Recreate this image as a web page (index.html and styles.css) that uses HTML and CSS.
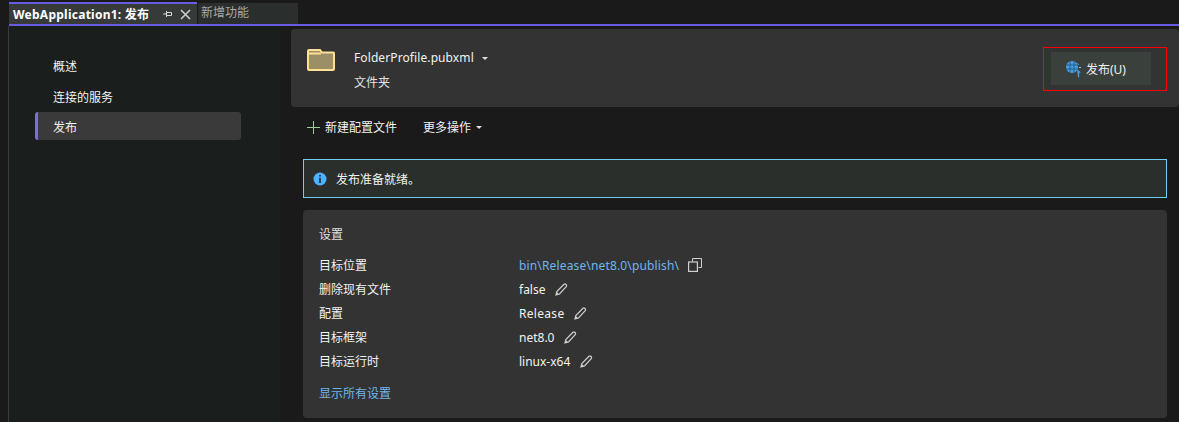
FILE: index.html
```html
<!DOCTYPE html>
<html lang="zh-CN">
<head>
  <meta charset="UTF-8" />
  <title>WebApplication1: 发布</title>
  <link rel="stylesheet" href="styles.css">
</head>
<body>

  <div class="tabs">
    <div class="tab active">
      <span class="tabName">WebApplication1: 发布</span>
      <svg class="pin" width="12" height="12" viewBox="0 0 12 12"><path d="M1 6h3M4.500 3v6M4.500 4.500h5v3h-5" fill="none" stroke="#d8d8d8"/></svg>
      <svg class="close" width="11" height="11" viewBox="0 0 11 11"><path d="M1 1l9 9M10 1l-9 9" fill="none" stroke="#d0d0d0" stroke-width="1.500"/></svg>
    </div>
    <div class="tab">新增功能</div>
  </div>

  <div class="page">
    <div class="side">
      <div class="item">概述</div>
      <div class="item">连接的服务</div>
      <div class="item selected">发布</div>
    </div>

    <div class="main">
      <div class="profile">
        <svg class="folder" width="28" height="22" viewBox="0 0 28 22">
          <path d="M1 20V2q0-1 1-1h11l2 2.500h11.500q.5 0 .5.500v16q0 1-1 1H2q-1 0-1-1z" fill="#9c8f68" stroke="#ffdf94" stroke-width="2"/>
          <path d="M1 4.500h13" stroke="#ffdf94" stroke-width="2"/>
        </svg>
        <div class="profileText">
          <div class="profileName">FolderProfile.pubxml <span class="caret"></span></div>
          <div class="profileType">文件夹</div>
        </div>
        <div class="highlight">
          <button class="btnPublish">
            <svg width="16" height="17" viewBox="0 0 16 17">
              <circle cx="6" cy="6" r="6" fill="#4a9ede"/>
              <path d="M0 4h12M0 8h12M4 .5v11M8 .5v11" stroke="#1f5f93" stroke-width="1"/>
              <path d="M11 8l4 3.500-1.800.3 0 4.700-1.200-.5z" fill="#4a9ede"/>
              <path d="M11.500 2.500l1 1M13 6.500h2" stroke="#8cc4ee"/>
            </svg>
            发布(U)
          </button>
        </div>
      </div>

      <div class="toolbar">
        <span class="tool">
          <svg width="13" height="13" viewBox="0 0 13 13"><path d="M6.500 0v13M0 6.500h13" stroke="#9fd09a"/></svg>
          新建配置文件
        </span>
        <span class="tool">更多操作 <span class="caret"></span></span>
      </div>

      <div class="content">
        <div class="info">
          <svg width="14" height="14" viewBox="0 0 14 14">
            <circle cx="7" cy="7" r="6.500" fill="#4db2ff"/>
            <rect x="6.200" y="2.800" width="1.600" height="1.700" fill="#16293a"/>
            <rect x="6.200" y="5.800" width="1.600" height="5.200" fill="#16293a"/>
          </svg>
          发布准备就绪。
        </div>

        <div class="settings">
          <div class="settingsTitle">设置</div>
          <div class="grid">
            <div>目标位置</div>
            <div class="value">
              <a class="link path">bin\Release\net8.0\publish\</a>
              <svg class="copy" width="14" height="14" viewBox="0 0 14 14"><path d="M4.500 3.500V.5h9v9h-3" fill="none" stroke="#cfcfcf"/><rect x=".6" y="4" width="8.800" height="9.400" fill="none" stroke="#cfcfcf" stroke-width="1.200"/></svg>
            </div>
            <div>删除现有文件</div>
            <div class="value">false <svg class="pen" width="13" height="13" viewBox="0 0 13 13"><path d="M1 12l.8-3.500L9 1.300q1-.8 2 .2t.2 2.200L4.500 11z" fill="none" stroke="#cfcfcf" stroke-width="1.200"/><path d="M1 12l.8-3 2.400 2.200z" fill="#cfcfcf"/></svg></div>
            <div>配置</div>
            <div class="value"><span class="wide">Release</span> <svg class="pen" width="13" height="13" viewBox="0 0 13 13"><path d="M1 12l.8-3.500L9 1.300q1-.8 2 .2t.2 2.200L4.500 11z" fill="none" stroke="#cfcfcf" stroke-width="1.200"/><path d="M1 12l.8-3 2.400 2.200z" fill="#cfcfcf"/></svg></div>
            <div>目标框架</div>
            <div class="value">net8.0 <svg class="pen" width="13" height="13" viewBox="0 0 13 13"><path d="M1 12l.8-3.500L9 1.300q1-.8 2 .2t.2 2.200L4.500 11z" fill="none" stroke="#cfcfcf" stroke-width="1.200"/><path d="M1 12l.8-3 2.400 2.200z" fill="#cfcfcf"/></svg></div>
            <div>目标运行时</div>
            <div class="value">linux-x64 <svg class="pen" width="13" height="13" viewBox="0 0 13 13"><path d="M1 12l.8-3.500L9 1.300q1-.8 2 .2t.2 2.200L4.500 11z" fill="none" stroke="#cfcfcf" stroke-width="1.200"/><path d="M1 12l.8-3 2.400 2.200z" fill="#cfcfcf"/></svg></div>
          </div>
          <a class="link showAll">显示所有设置</a>
        </div>
      </div>
    </div>
  </div>

</body>
</html>
```

FILE: styles.css
```css
* {
  box-sizing: border-box;
}

body {
  margin: 0;
  height: 422px;
  overflow: hidden;
  background-color: #1a1a1a;
  color: #f2f2f2;
  font-family: "Noto Sans", "Noto Sans CJK SC", sans-serif;
  font-size: 12px;
  display: flex;
  flex-direction: column;
}

svg {
  flex-shrink: 0;
}

.tabs {
  display: flex;
  height: 26px;
  margin-left: 9px;
  padding-top: 2px;
  border-bottom: 2px solid #6a5ce0;
}

.tab {
  width: 100px;
  margin-top: 1px;
  padding-left: 3px;
  margin-left: 1px;
  background-color: #2a2f2d;
  color: #a8a8a8;
  line-height: 19px;
}

.tab.active {
  width: 188px;
  margin: 0;
  padding-left: 4px;
  display: flex;
  align-items: center;
  background-color: #363b39;
  border-top: 2px solid #6a5ce0;
  color: #fff;
  font-weight: 700;
}

.tabName {
  width: 148px;
  font-size: 12px;
  letter-spacing: 0.25px;
  white-space: nowrap;
}

.pin {
  margin-left: 1px;
}

.close {
  margin-left: 6px;
}

.page {
  flex: 1;
  display: flex;
  min-height: 0;
}

.side {
  width: 272px;
  margin-left: 8px;
  padding: 27px 0 0 26px;
  background-color: #1a1f1d;
  border-left: 1px solid #3a3a3a;
}

.item {
  width: 206px;
  height: 28px;
  padding-left: 18px;
  margin-bottom: 3px;
  line-height: 28px;
  border-radius: 3px;
}

.item.selected {
  margin-top: -3px;
  line-height: 31px;
  background-color: #3a3a3a;
  border-left: 3px solid #7b6fd8;
  padding-left: 15px;
}

.main {
  flex: 1;
  padding: 3px 0 0 11px;
  min-width: 0;
}

.profile {
  height: 78px;
  display: flex;
  align-items: flex-start;
  padding: 20px 12px 0 16px;
  background-color: #333;
  border-radius: 4px;
}

.profileText {
  flex: 1;
  margin: -1px 0 0 19px;
}

.profileName {
  line-height: 20px;
  letter-spacing: 0.1px;
}

.profileType {
  margin-top: 5px;
  line-height: 20px;
  color: #e0e0e0;
}

.caret {
  display: inline-block;
  width: 0;
  height: 0;
  margin-left: 5px;
  vertical-align: middle;
  border: 3px solid transparent;
  border-top: 3px solid #e0e0e0;
  border-bottom: 0;
}

.highlight {
  width: 124px;
  height: 44px;
  margin-top: -2px;
  padding: 4px 0 0 7px;
  border: 1px solid red;
}

.btnPublish {
  width: 100px;
  height: 33px;
  display: flex;
  align-items: center;
  gap: 4px;
  padding: 1px 0 0 15px;
  border: none;
  background-color: #3a403c;
  color: #f2f2f2;
  font: inherit;
}

.toolbar {
  display: flex;
  align-items: center;
  gap: 26px;
  height: 40px;
  padding-left: 16px;
}

.tool {
  display: flex;
  align-items: center;
  gap: 5px;
}

.tool .caret {
  margin-left: 0;
}

.content {
  padding: 12px 12px 0;
}

.info {
  height: 39px;
  display: flex;
  align-items: center;
  gap: 9px;
  padding-left: 9px;
  margin-bottom: 12px;
  background-color: #2a2f2c;
  border: 1px solid #6ecdf0;
}

.settings {
  height: 208px;
  padding: 16px 16px;
  background-color: #333;
  border-radius: 4px;
}

.settingsTitle {
  line-height: 18px;
  margin-bottom: 9px;
  color: #e0e0e0;
}

.grid {
  display: grid;
  grid-template-columns: 200px 1fr;
  grid-auto-rows: 24px;
  align-items: center;
}

.value {
  display: flex;
  align-items: center;
  gap: 10px;
}

.copy {
  margin-left: -1px;
}

.wide {
  letter-spacing: 0.3px;
}

.link {
  color: #6fb5ee;
}

.path {
  letter-spacing: 0.15px;
}

.showAll {
  display: inline-block;
  margin-top: 11px;
}
```
